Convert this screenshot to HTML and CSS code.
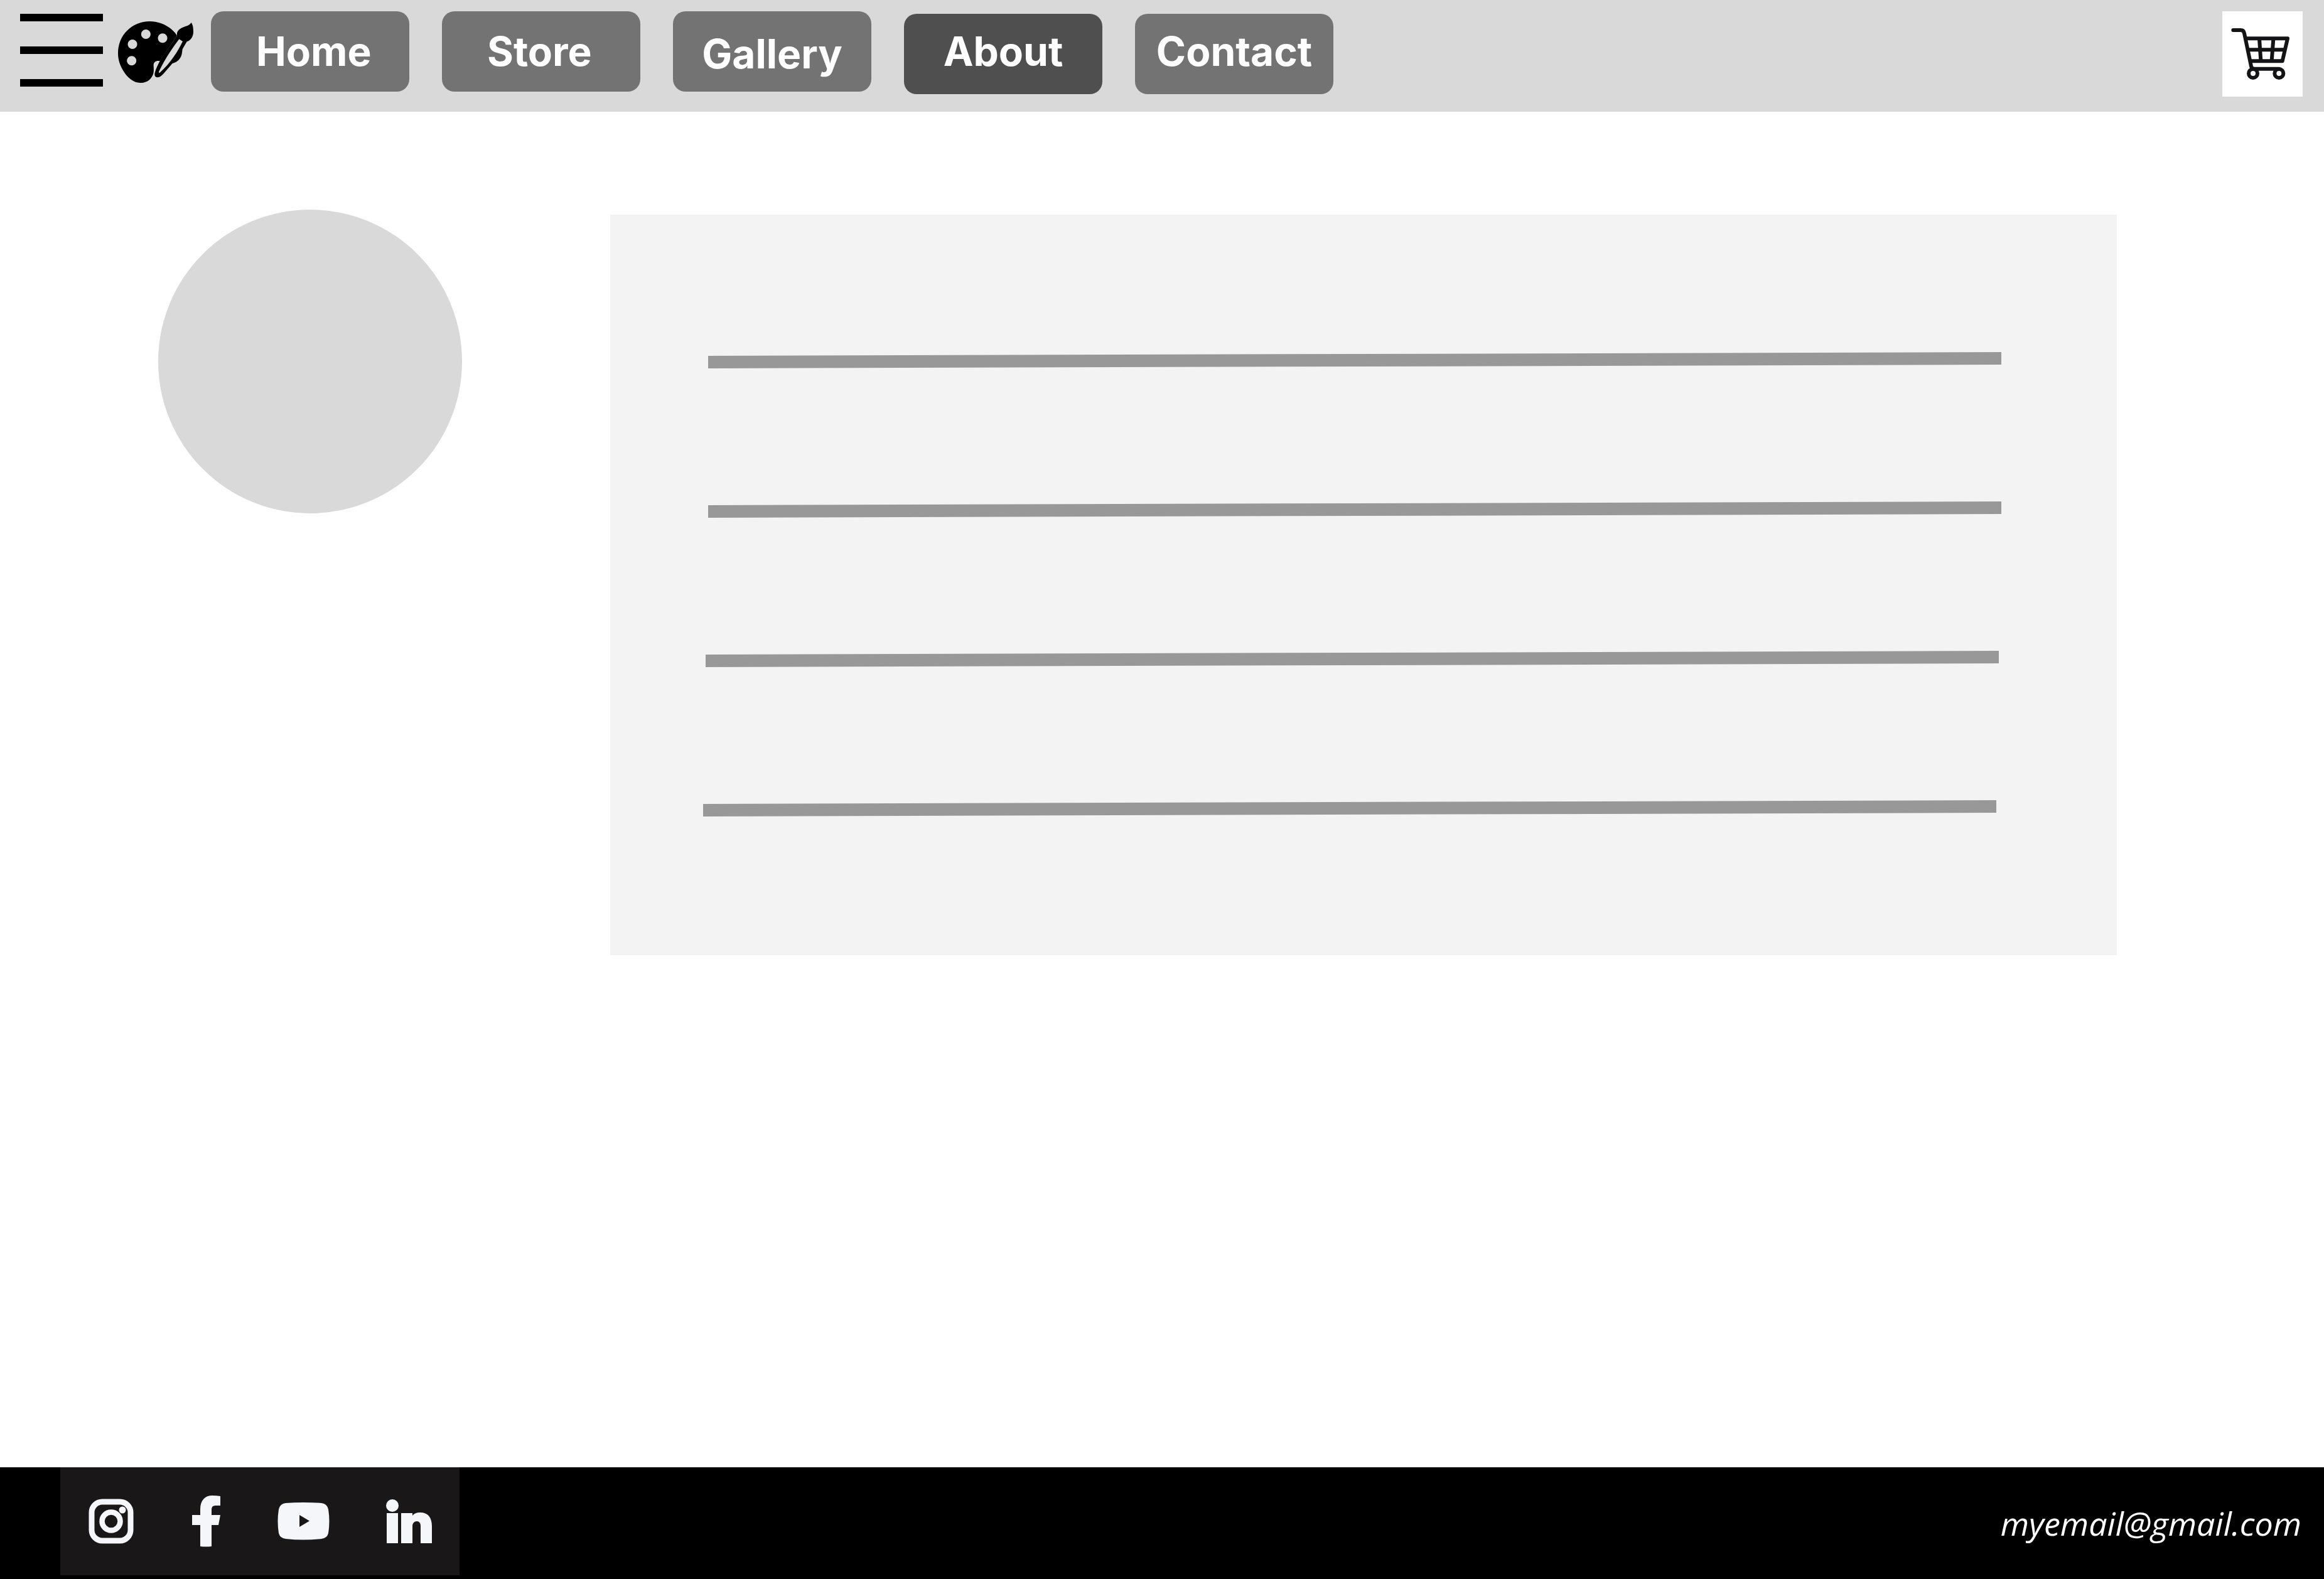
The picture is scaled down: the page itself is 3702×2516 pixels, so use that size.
FILE: index.html
```html
<!DOCTYPE html>
<html lang="en">
<head>
<meta charset="utf-8">
<meta name="viewport" content="width=device-width, initial-scale=1">
<title>About</title>
<link rel="stylesheet" href="styles.css">
</head>
<body>
<header class="header">
  <button class="menu" type="button" aria-label="Menu">
    <span class="menu-bar"></span>
    <span class="menu-bar"></span>
    <span class="menu-bar"></span>
  </button>
  <a class="logo" href="#" aria-label="Art studio">
    <svg class="logo-icon" viewBox="564 102 360 294" aria-hidden="true">
      <path fill-rule="evenodd" d="M716 102C766 102 818 128 846 170L764 292C746 288 732 297 734 316C736 345 734 355 723 371C709 390 691 396 669 396C640 396 612 374 594 346C574 316 564 286 564 255C564 168 630 102 716 102ZM697 141a22.500 22.500 0 1 0 .1 0ZM777 160a22.500 22.500 0 1 0 .1 0ZM633 189a22.500 22.500 0 1 0 .1 0ZM629 268a22.500 22.500 0 1 0 .1 0Z"/>
      <path d="M914 108C921 118 924 130 924 153C923 177 911 193 893 199L872 235C870 246 871 257 865 270C857 287 845 297 824 303L787 346C777 357 767 370 753 370C741 370 737 360 740 348C745 328 757 306 767 286L846 170C844 155 849 145 862 137C882 124 902 127 914 108Z"/>
      <path class="logo-handle" d="M856 187L873 198C850 245 815 302 763 348C757 348 759 342 762 337C790 280 822 232 856 187Z"/>
    </svg>
  </a>
  <nav class="nav" aria-label="Main">
    <a class="nav-link nav-link--start" href="#">Home</a>
    <a class="nav-link nav-link--start" href="#">Store</a>
    <a class="nav-link nav-link--descender" href="#">Gallery</a>
    <a class="nav-link nav-link--low nav-link--current" href="#" aria-current="page">About</a>
    <a class="nav-link nav-link--low" href="#">Contact</a>
  </nav>
  <a class="cart" href="#" aria-label="Shopping cart">
    <svg class="cart-icon" viewBox="120 54 384 408" aria-hidden="true">
      <g fill="none" stroke="#141416" stroke-width="18" stroke-linecap="round" stroke-linejoin="round">
        <path d="M172 144H209Q222 144 225 159L258 317Q261 329 274 329H391"/>
        <path d="M231 184H432L407 292H255M243 238H418M297 186L304 290M364 186L356 290"/>
        <circle cx="267" cy="351" r="21"/>
        <circle cx="391" cy="351" r="21"/>
      </g>
    </svg>
  </a>
</header>

<main class="about">
  <div class="portrait" role="img" aria-label="Portrait"></div>
  <ul class="bio" aria-label="Biography">
    <li class="bio-line"></li>
    <li class="bio-line"></li>
    <li class="bio-line"></li>
    <li class="bio-line"></li>
  </ul>
</main>

<footer class="footer">
  <div class="social">
    <a class="social-link" href="#" aria-label="Instagram">
      <svg width="72" height="72" viewBox="0 0 72 72" aria-hidden="true">
        <rect x="5" y="5" width="62" height="62" rx="17" fill="none" stroke="currentColor" stroke-width="9"/>
        <circle cx="36" cy="36" r="14.500" fill="none" stroke="currentColor" stroke-width="8.500"/>
        <circle cx="54" cy="18" r="5.500" fill="currentColor"/>
      </svg>
    </a>
    <a class="social-link" href="#" aria-label="Facebook">
      <svg width="48" height="82" viewBox="-3 0 48 82" aria-hidden="true">
        <path fill="currentColor" d="M13 81V47H0V31H13V22C13 7 21 0 32 0Q39 0 45 1V16H37Q31 16 31 22V31H45L42 47H31V81Q22 82 13 81Z"/>
      </svg>
    </a>
    <a class="social-link" href="#" aria-label="YouTube">
      <svg width="85" height="60" viewBox="-2 0 85 60" aria-hidden="true">
        <path fill="currentColor" fill-rule="evenodd" d="M13 1Q41 -1 70 1Q79 2 81 11Q84 30 81 49Q79 57 70 58Q41 61 13 58Q4 57 2 49Q-1 30 2 11Q4 2 13 1ZM35 20V39L51 29.500Z"/>
      </svg>
    </a>
    <a class="social-link" href="#" aria-label="LinkedIn">
      <svg width="74" height="71" viewBox="0 0 74 71" aria-hidden="true">
        <circle cx="10" cy="10" r="10" fill="currentColor"/>
        <path fill="currentColor" d="M1 22H19V70H1ZM24 22H42V26Q46 21 54 21C67 21 73 29 73 43V70H55V43C55 38 53 35 49 35C45 35 42 38 42 43V70H24Z"/>
      </svg>
    </a>
  </div>
  <a class="email" href="mailto:myemail@gmail.com">myemail@gmail.com</a>
</footer>
</body>
</html>
```
FILE: styles.css
```css
* {
  box-sizing: border-box;
}

body {
  margin: 0;
  min-height: 100vh;
  display: flex;
  flex-direction: column;
  background: #fff;
  font-family: Inter, "Liberation Sans", sans-serif;
}

a {
  color: inherit;
  text-decoration: none;
}

.header {
  display: flex;
  align-items: flex-start;
  height: 178px;
  padding: 18px 34px 0 32px;
  background: #d9d9d9;
}

.menu {
  display: flex;
  flex-direction: column;
  gap: 40px;
  width: 132px;
  padding: 4px 0;
  border: 0;
  background: none;
}

.menu-bar {
  height: 12px;
  background: #000;
}

.logo {
  margin: 16px 28px 0 24px;
}

.logo-icon {
  display: block;
  width: 120px;
  height: 98px;
}

.logo-handle {
  fill: #d9d9d9;
}

.nav {
  display: flex;
  align-items: flex-start;
  gap: 52px;
}

.nav-link {
  display: flex;
  align-items: center;
  justify-content: center;
  width: 316px;
  height: 128px;
  border-radius: 20px;
  background: #737373;
  color: #fff;
  font-size: 64px;
  font-weight: 700;
  line-height: 80px;
}

.nav-link--start {
  justify-content: flex-start;
  padding-left: 72px;
}

.nav-link--descender {
  padding-top: 8px;
}

.nav-link--low {
  margin-top: 4px;
  padding-bottom: 8px;
}

.nav-link--current {
  background: #4f4f4f;
}

.cart {
  margin-left: auto;
  background: #fff;
}

.cart-icon {
  display: block;
  width: 128px;
  height: 136px;
}

.about {
  flex: 1;
  display: flex;
  align-items: flex-start;
  gap: 236px;
  padding: 156px 330px 156px 252px;
}

.portrait {
  flex: none;
  width: 484px;
  height: 484px;
  border-radius: 50%;
  background: #d9d9d9;
}

.bio {
  flex: 1;
  display: flex;
  flex-direction: column;
  gap: 218px;
  margin: 8px 0 0;
  padding: 222px 192px 224px 148px;
  background: #f3f3f3;
  list-style: none;
}

.bio-line {
  height: 20px;
  background: #989898;
  transform: skewY(-0.16deg);
}

/* The upper lines step right, like a ragged paragraph. */
.bio-line:nth-child(-n+2) {
  margin: 0 -8px 0 8px;
}

.bio-line:nth-child(3) {
  margin: 0 -4px 0 4px;
}

.footer {
  display: flex;
  align-items: flex-start;
  justify-content: space-between;
  height: 178px;
  padding: 0 36px 0 96px;
  background: #000;
  color: #fff;
}

.social {
  display: flex;
  align-items: center;
  justify-content: space-between;
  width: 636px;
  height: 172px;
  padding: 0 43px 0 45px;
  background: #191718;
  color: #f5f6fa;
}

.social-link svg {
  display: block;
}

.email {
  align-self: center;
  font-family: "Open Sans", "Noto Sans", sans-serif;
  font-size: 52px;
  font-style: italic;
  line-height: 64px;
}
```
